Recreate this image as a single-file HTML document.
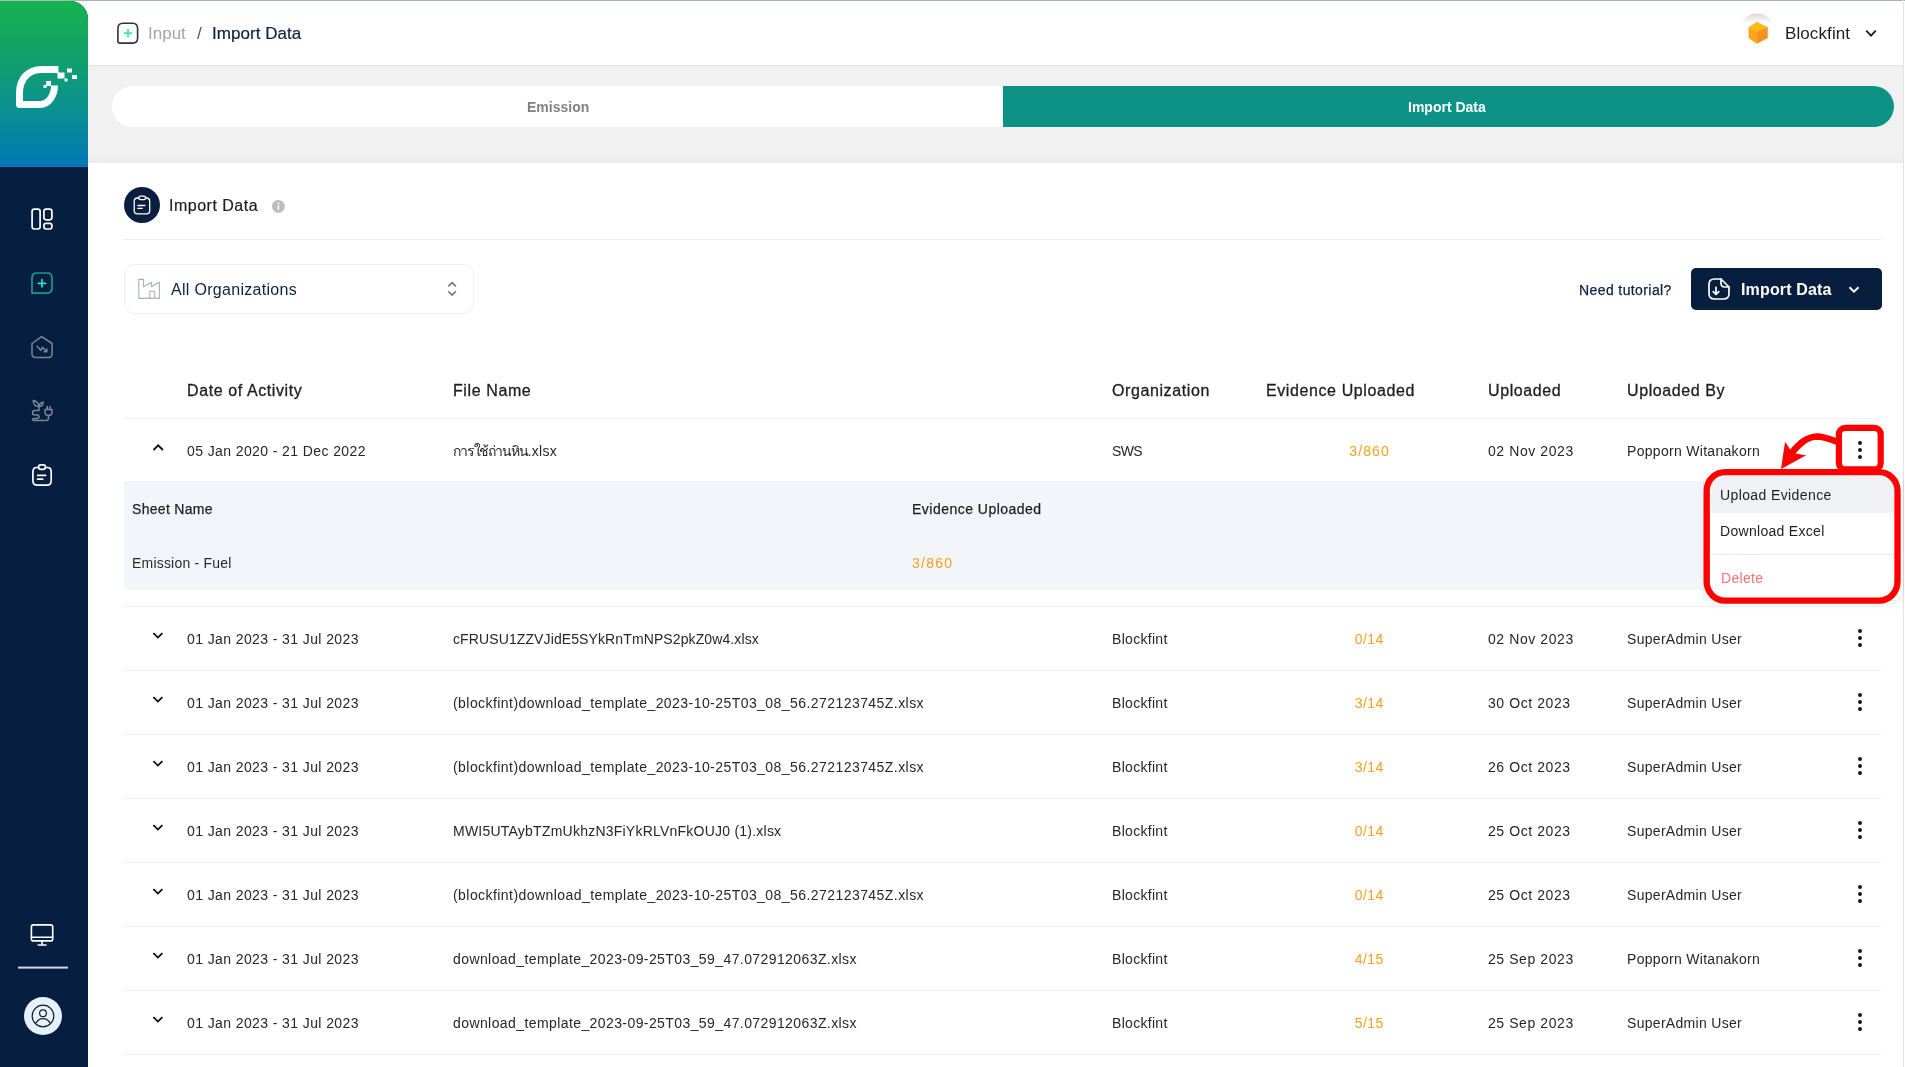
<!DOCTYPE html>
<html><head><meta charset="utf-8"><style>
*{box-sizing:border-box;margin:0;padding:0}
html,body{width:1905px;height:1067px;overflow:hidden;background:#fff;font-family:"Liberation Sans",sans-serif;color:#262626}
.a{position:absolute}
.t{position:absolute;white-space:nowrap;line-height:1;will-change:transform}
svg{position:absolute;overflow:visible}
</style></head><body>
<div class="a" style="left:0;top:0;width:1905px;height:1px;background:#a3b6bd"></div>
<div class="a" style="left:88px;top:1px;width:1815px;height:64px;background:#fff"></div>
<div class="a" style="left:88px;top:65px;width:1815px;height:1px;background:#e3e3e3"></div>
<div class="a" style="left:88px;top:66px;width:1815px;height:97px;background:linear-gradient(180deg,#f1f1f1 0%,#f1f1f1 88%,#ececec 100%)"></div>
<div class="a" style="left:1903px;top:0;width:1px;height:1067px;background:#e4e4e4"></div>
<div class="a" style="left:0;top:1px;width:88px;height:1066px;background:#061e3f;border-top-right-radius:18px;overflow:hidden"><div class="a" style="left:0;top:0;width:88px;height:166px;background:linear-gradient(180deg,#16b34f 0%,#10a06c 35%,#0b9190 65%,#0277b6 100%)"></div></div>
<svg style="left:0;top:0" width="88" height="170">
<path d="M58.5,69.5 L42,69.5 C28,69.5 19.5,79 19.5,93 L19.5,104.5 L40,104.5 C49,104.5 54.5,95 54.5,85.6" fill="none" stroke="#fff" stroke-width="7" stroke-linejoin="round"/>
<rect x="57.5" y="72.5" width="7" height="6" fill="#fff"/>
<rect x="64.5" y="78.5" width="3" height="3" fill="#fff"/>
<rect x="67" y="68.5" width="5" height="4" fill="#fff"/>
<rect x="72" y="75" width="5" height="4" fill="#fff"/>
<rect x="46" y="81" width="5" height="5" fill="#fff"/>
<rect x="43.5" y="85" width="3" height="3" fill="#fff"/>
</svg>
<svg style="left:0;top:0" width="88" height="1067">
<g fill="none" stroke="#fff" stroke-width="1.7">
 <rect x="32.1" y="209.2" width="8" height="19.8" rx="2.2"/>
 <rect x="43.9" y="209.2" width="8" height="10.6" rx="2.2"/>
 <rect x="43.9" y="223.3" width="8" height="5.7" rx="2.2"/>
</g>
<path d="M32,293.1 L32,278 Q32,273 37,273 L47,273 Q52,273 52,278 L52,288 Q52,293.1 47,293.1 Z" fill="none" stroke="#129e8c" stroke-width="1.7"/>
<path d="M42,279 V287.6 M37.7,283.3 H46.3" stroke="#1de9b6" stroke-width="1.7"/>
<g fill="none" stroke="#7a8797" stroke-width="1.5" stroke-linecap="round" stroke-linejoin="round">
 <path d="M32,343.5 L41.6,336.6 L52.1,343.5 L52.1,354 Q52.1,357.4 48.5,357.4 L35.6,357.4 Q32,357.4 32,354 Z"/>
 <path d="M37,346.3 L40.7,350.3 L42.4,347.3 L46.5,351.6 M46.8,348.9 L46.8,351.8 L44,351.8"/>
</g>
<g fill="none" stroke="#7a8797" stroke-width="1.5" stroke-linecap="round" stroke-linejoin="round">
 <path d="M33.2,400.5 Q33.5,406.5 39,406.5 Q38.5,401.5 33.2,400.5 Z"/>
 <path d="M43.3,402.3 Q39,403 39,406.5 Q42.7,406.3 43.3,402.3 Z"/>
 <path d="M39,406.5 L39,410.5 L34.8,410.5 Q32.5,410.5 32.5,412.8 Q32.5,415 34.8,415 L37,415 Q39,415 39,416.8 Q39,418.5 37,418.5 L34.8,418.5 Q32.5,418.5 32.5,419.5 Q32.5,420.5 34.8,420.5 L46,420.5 Q48.5,420.5 48.5,418 L48.5,415.5"/>
 <path d="M45,409.5 L52,409.5 L52,412 Q52,415.5 48.5,415.5 Q45,415.5 45,412 Z"/>
 <path d="M47.2,406.5 V409.5 M50,406.5 V409.5"/>
</g>
<g fill="none" stroke="#fff" stroke-width="1.7" stroke-linecap="round">
 <path d="M38.5,467.5 L36.5,467.5 Q32.9,467.5 32.9,472 L32.9,480.5 Q32.9,485.2 37.5,485.2 L46.8,485.2 Q51.2,485.2 51.2,480.5 L51.2,472 Q51.2,467.5 47.5,467.5 L45.5,467.5"/>
 <rect x="38.5" y="464.8" width="7" height="4.6" rx="2.3"/>
 <path d="M37.6,475.3 H45.6 M37.6,479.2 H42.7"/>
</g>
<g fill="none" stroke="#fff" stroke-width="1.6" stroke-linecap="round">
 <rect x="31.4" y="924.9" width="21.3" height="16" rx="2"/>
 <path d="M31.4,937.2 H52.7 M42,941 V945 M38.2,945 H46"/>
</g>
<rect x="18" y="966.6" width="50" height="2" fill="#d5d9df"/>
<circle cx="43" cy="1016" r="19" fill="#e3f2fd"/>
<g fill="none" stroke="#1a1a1a" stroke-width="1.2">
 <circle cx="43" cy="1016" r="10.8"/>
 <circle cx="43" cy="1013.3" r="3.4"/>
 <path d="M35.5,1023.8 Q38,1018.6 43,1018.6 Q48,1018.6 50.5,1023.8"/>
</g>
</svg>
<svg style="left:0;top:0" width="1905" height="66">
<path d="M117.9,41 L117.9,28.5 Q117.9,23.3 123,23.3 L132.5,23.3 Q137.6,23.3 137.6,28.5 L137.6,38 Q137.6,43.1 132.5,43.1 L120,43.1 Q117.9,43.1 117.9,41 Z" fill="none" stroke="#333" stroke-width="1.6" stroke-linejoin="round"/>
<path d="M128.05,29.1 V37.2 M124,33.1 H132.1" stroke="#33e6b3" stroke-width="1.7"/>
<circle cx="1757.2" cy="32.3" r="18.7" fill="url(#avg)"/>
<defs><linearGradient id="avg" x1="0" y1="0" x2="0" y2="1"><stop offset="0" stop-color="#dadada"/><stop offset="0.12" stop-color="#ebebeb"/><stop offset="0.22" stop-color="#f9f9f9"/><stop offset="0.3" stop-color="#ffffff"/><stop offset="1" stop-color="#ffffff"/></linearGradient></defs>
<path d="M1756.8,22.1 L1767.6,27.4 L1756.8,32.1 L1748.8,27.4 Z" fill="#fbb913" stroke="#fbb913" stroke-width="0.4"/>
<path d="M1748.8,27.4 L1756.8,32.1 L1756.8,43.4 L1748.8,38 Z" fill="#f9a61b" stroke="#f9a61b" stroke-width="0.4"/>
<path d="M1756.8,32.1 L1767.6,27.4 L1767.6,38 L1756.8,43.4 Z" fill="#f6921e" stroke="#f6921e" stroke-width="0.4"/>
<path d="M1866.2,30.6 L1871,35.6 L1875.8,30.6" fill="none" stroke="#1a1a1a" stroke-width="1.8"/>
</svg>
<div class="t" style="left:147.8px;top:24.88px;font-size:17px;color:#a5a5a5;font-weight:normal;letter-spacing:0px;">Input</div>
<div class="t" style="left:196.5px;top:24.88px;font-size:17px;color:#555;font-weight:normal;letter-spacing:0px;">/</div>
<div class="t" style="left:212.0px;top:24.88px;font-size:17px;color:#0c2142;font-weight:normal;letter-spacing:0.05px;-webkit-text-stroke:0.2px #0c2142">Import Data</div>
<div class="t" style="left:1784.6px;top:24.68px;font-size:17px;color:#1e1e1e;font-weight:normal;letter-spacing:0.1px;">Blockfint</div>
<div class="a" style="left:112px;top:86px;width:1782px;height:41px;background:#fff;border-radius:20.5px;overflow:hidden"><div class="a" style="left:891px;top:0;width:891px;height:41px;background:#0d9285"></div></div>
<div class="t" style="left:526.8px;top:99.97px;font-size:14px;color:#828282;font-weight:bold;letter-spacing:0px;">Emission</div>
<div class="t" style="left:1408.3px;top:99.97px;font-size:14px;color:#fff;font-weight:bold;letter-spacing:0px;">Import Data</div>
<svg style="left:0;top:0" width="400" height="330">
<circle cx="142" cy="205" r="18" fill="#0a1f40"/>
<g fill="none" stroke="#fff" stroke-width="1.3" stroke-linecap="round">
 <path d="M138.8,198 L137.5,198 Q134.2,198 134.2,201.5 L134.2,210.5 Q134.2,213.8 137.5,213.8 L146.5,213.8 Q149.7,213.8 149.7,210.5 L149.7,201.5 Q149.7,198 146.5,198 L145.5,198"/>
 <rect x="138.8" y="196.2" width="6.8" height="3.4" rx="1.7"/>
 <path d="M137.8,205.5 H144.9 M137.8,208.4 H142.1"/>
</g>
<circle cx="278.4" cy="206.4" r="6.4" fill="#bdbdbd"/>
<rect x="277.7" y="205.3" width="1.5" height="4.6" fill="#fff"/>
<circle cx="278.45" cy="203.4" r="0.9" fill="#fff"/>
<g fill="none" stroke="#a6afbb" stroke-width="1.1">
 <path d="M138.8,279.4 H143.5 V286.6 L151.6,282.4 V286.6 L159.4,282.2 V298.4 H138.8 Z"/>
 <path d="M149.8,298.4 V291.2 H154.7 V298.4"/>
</g>
<path d="M448.3,286.4 L452.1,282.6 L455.9,286.4 M448.3,291.3 L452.1,295.1 L455.9,291.3" fill="none" stroke="#6b7380" stroke-width="1.5"/>
</svg>
<div class="t" style="left:168.6px;top:198.01px;font-size:16px;color:#1e1e1e;font-weight:normal;letter-spacing:0.5px;-webkit-text-stroke:0.2px #1e1e1e">Import Data</div>
<div class="a" style="left:124px;top:239px;width:1758px;height:1px;background:#eceef2"></div>
<div class="a" style="left:124px;top:264px;width:350px;height:50px;border:1px solid #eceff3;border-radius:10px"></div>
<div class="t" style="left:171.4px;top:282.11px;font-size:16px;color:#0c2142;font-weight:normal;letter-spacing:0.3px;">All Organizations</div>
<div class="t" style="left:1578.7px;top:282.67px;font-size:14px;color:#0c2142;font-weight:normal;letter-spacing:0.4px;-webkit-text-stroke:0.25px #0c2142">Need tutorial?</div>
<div class="a" style="left:1691px;top:268px;width:191px;height:42px;border-radius:5px;background:#081e3e"></div>
<svg style="left:0;top:0" width="1905" height="330">
<g fill="none" stroke="#fff" stroke-width="1.7" stroke-linecap="round" stroke-linejoin="round">
 <path d="M1721,279 L1714.5,279 Q1709,279 1709,284.5 L1709,293.5 Q1709,299 1714.5,299 L1723.5,299 Q1729,299 1729,293.5 L1729,287 Z"/>
 <path d="M1721,279 L1721,283 Q1721,287 1725,287 L1729,287"/>
 <path d="M1716,287.3 V294.3 M1713.2,291.6 L1716,294.5 L1718.8,291.6"/>
</g>
<path d="M1849.5,287.2 L1854,291.7 L1858.5,287.2" fill="none" stroke="#fff" stroke-width="2"/>
</svg>
<div class="t" style="left:1740.6px;top:281.51px;font-size:16px;color:#fff;font-weight:bold;letter-spacing:0.15px;">Import Data</div>
<div class="t" style="left:186.6px;top:382.91px;font-size:16px;color:#1e1e1e;font-weight:normal;letter-spacing:0.6px;-webkit-text-stroke:0.3px #1e1e1e">Date of Activity</div>
<div class="t" style="left:452.5px;top:382.91px;font-size:16px;color:#1e1e1e;font-weight:normal;letter-spacing:0.6px;-webkit-text-stroke:0.3px #1e1e1e">File Name</div>
<div class="t" style="left:1112px;top:382.91px;font-size:16px;color:#1e1e1e;font-weight:normal;letter-spacing:0.6px;-webkit-text-stroke:0.3px #1e1e1e">Organization</div>
<div class="t" style="left:1266px;top:382.91px;font-size:16px;color:#1e1e1e;font-weight:normal;letter-spacing:0.6px;-webkit-text-stroke:0.3px #1e1e1e">Evidence Uploaded</div>
<div class="t" style="left:1488.3px;top:382.91px;font-size:16px;color:#1e1e1e;font-weight:normal;letter-spacing:0.6px;-webkit-text-stroke:0.3px #1e1e1e">Uploaded</div>
<div class="t" style="left:1626.5px;top:382.91px;font-size:16px;color:#1e1e1e;font-weight:normal;letter-spacing:0.6px;-webkit-text-stroke:0.3px #1e1e1e">Uploaded By</div>
<div class="a" style="left:124px;top:418px;width:1758px;height:1px;background:#eff3f9"></div>
<div class="a" style="left:124px;top:481px;width:1758px;height:109px;background:#f2f5fa"></div>
<div class="t" style="left:132.3px;top:502.17px;font-size:14px;color:#1e1e1e;font-weight:normal;letter-spacing:0.3px;-webkit-text-stroke:0.25px #1e1e1e">Sheet Name</div>
<div class="t" style="left:912.2px;top:502.17px;font-size:14px;color:#1e1e1e;font-weight:normal;letter-spacing:0.48px;-webkit-text-stroke:0.25px #1e1e1e">Evidence Uploaded</div>
<div class="t" style="left:132.3px;top:556.17px;font-size:14px;color:#2a2a2a;font-weight:normal;letter-spacing:0.2px;">Emission - Fuel</div>
<div class="t" style="left:912.4px;top:556.17px;font-size:14px;color:#f59f1c;font-weight:normal;letter-spacing:1.25px;">3/860</div>
<div class="t" style="left:186.6px;top:443.97px;font-size:14px;color:#262626;font-weight:normal;letter-spacing:0.4px;">05 Jan 2020 - 21 Dec 2022</div>
<div class="t" style="left:452.5px;top:443.97px;font-size:14px;color:#262626;font-weight:normal;letter-spacing:0px;"><span style="letter-spacing:-1.15px">การใช้ถ่านหิน</span><span style="letter-spacing:0.3px">.xlsx</span></div>
<div class="t" style="left:1112.3px;top:443.97px;font-size:14px;color:#262626;font-weight:normal;letter-spacing:-0.6px;">SWS</div>
<div class="t" style="left:1269px;width:200px;text-align:center;top:443.97px;font-size:14px;color:#f59f1c;letter-spacing:1.1px;text-indent:1.1px">3/860</div>
<div class="t" style="left:1488.3px;top:443.97px;font-size:14px;color:#262626;font-weight:normal;letter-spacing:0.58px;">02 Nov 2023</div>
<div class="t" style="left:1626.5px;top:443.97px;font-size:14px;color:#262626;font-weight:normal;letter-spacing:0.3px;">Popporn Witanakorn</div>
<div class="t" style="left:186.6px;top:631.87px;font-size:14px;color:#262626;font-weight:normal;letter-spacing:0.4px;">01 Jan 2023 - 31 Jul 2023</div>
<div class="t" style="left:452.5px;top:631.87px;font-size:14px;color:#262626;font-weight:normal;letter-spacing:0.11px;">cFRUSU1ZZVJidE5SYkRnTmNPS2pkZ0w4.xlsx</div>
<div class="t" style="left:1112.3px;top:631.87px;font-size:14px;color:#262626;font-weight:normal;letter-spacing:0.3px;">Blockfint</div>
<div class="t" style="left:1269px;width:200px;text-align:center;top:631.87px;font-size:14px;color:#f59f1c;letter-spacing:0.4px;text-indent:0.4px">0/14</div>
<div class="t" style="left:1488.3px;top:631.87px;font-size:14px;color:#262626;font-weight:normal;letter-spacing:0.58px;">02 Nov 2023</div>
<div class="t" style="left:1626.5px;top:631.87px;font-size:14px;color:#262626;font-weight:normal;letter-spacing:0.3px;">SuperAdmin User</div>
<div class="a" style="left:124px;top:670px;width:1758px;height:1px;background:#eff3f9"></div>
<div class="t" style="left:186.6px;top:695.87px;font-size:14px;color:#262626;font-weight:normal;letter-spacing:0.4px;">01 Jan 2023 - 31 Jul 2023</div>
<div class="t" style="left:452.5px;top:695.87px;font-size:14px;color:#262626;font-weight:normal;letter-spacing:0.44px;">(blockfint)download_template_2023-10-25T03_08_56.272123745Z.xlsx</div>
<div class="t" style="left:1112.3px;top:695.87px;font-size:14px;color:#262626;font-weight:normal;letter-spacing:0.3px;">Blockfint</div>
<div class="t" style="left:1269px;width:200px;text-align:center;top:695.87px;font-size:14px;color:#f59f1c;letter-spacing:0.4px;text-indent:0.4px">3/14</div>
<div class="t" style="left:1488.3px;top:695.87px;font-size:14px;color:#262626;font-weight:normal;letter-spacing:0.58px;">30 Oct 2023</div>
<div class="t" style="left:1626.5px;top:695.87px;font-size:14px;color:#262626;font-weight:normal;letter-spacing:0.3px;">SuperAdmin User</div>
<div class="a" style="left:124px;top:734px;width:1758px;height:1px;background:#eff3f9"></div>
<div class="t" style="left:186.6px;top:759.87px;font-size:14px;color:#262626;font-weight:normal;letter-spacing:0.4px;">01 Jan 2023 - 31 Jul 2023</div>
<div class="t" style="left:452.5px;top:759.87px;font-size:14px;color:#262626;font-weight:normal;letter-spacing:0.44px;">(blockfint)download_template_2023-10-25T03_08_56.272123745Z.xlsx</div>
<div class="t" style="left:1112.3px;top:759.87px;font-size:14px;color:#262626;font-weight:normal;letter-spacing:0.3px;">Blockfint</div>
<div class="t" style="left:1269px;width:200px;text-align:center;top:759.87px;font-size:14px;color:#f59f1c;letter-spacing:0.4px;text-indent:0.4px">3/14</div>
<div class="t" style="left:1488.3px;top:759.87px;font-size:14px;color:#262626;font-weight:normal;letter-spacing:0.58px;">26 Oct 2023</div>
<div class="t" style="left:1626.5px;top:759.87px;font-size:14px;color:#262626;font-weight:normal;letter-spacing:0.3px;">SuperAdmin User</div>
<div class="a" style="left:124px;top:798px;width:1758px;height:1px;background:#eff3f9"></div>
<div class="t" style="left:186.6px;top:823.87px;font-size:14px;color:#262626;font-weight:normal;letter-spacing:0.4px;">01 Jan 2023 - 31 Jul 2023</div>
<div class="t" style="left:452.5px;top:823.87px;font-size:14px;color:#262626;font-weight:normal;letter-spacing:0.23px;">MWI5UTAybTZmUkhzN3FiYkRLVnFkOUJ0 (1).xlsx</div>
<div class="t" style="left:1112.3px;top:823.87px;font-size:14px;color:#262626;font-weight:normal;letter-spacing:0.3px;">Blockfint</div>
<div class="t" style="left:1269px;width:200px;text-align:center;top:823.87px;font-size:14px;color:#f59f1c;letter-spacing:0.4px;text-indent:0.4px">0/14</div>
<div class="t" style="left:1488.3px;top:823.87px;font-size:14px;color:#262626;font-weight:normal;letter-spacing:0.58px;">25 Oct 2023</div>
<div class="t" style="left:1626.5px;top:823.87px;font-size:14px;color:#262626;font-weight:normal;letter-spacing:0.3px;">SuperAdmin User</div>
<div class="a" style="left:124px;top:862px;width:1758px;height:1px;background:#eff3f9"></div>
<div class="t" style="left:186.6px;top:887.87px;font-size:14px;color:#262626;font-weight:normal;letter-spacing:0.4px;">01 Jan 2023 - 31 Jul 2023</div>
<div class="t" style="left:452.5px;top:887.87px;font-size:14px;color:#262626;font-weight:normal;letter-spacing:0.44px;">(blockfint)download_template_2023-10-25T03_08_56.272123745Z.xlsx</div>
<div class="t" style="left:1112.3px;top:887.87px;font-size:14px;color:#262626;font-weight:normal;letter-spacing:0.3px;">Blockfint</div>
<div class="t" style="left:1269px;width:200px;text-align:center;top:887.87px;font-size:14px;color:#f59f1c;letter-spacing:0.4px;text-indent:0.4px">0/14</div>
<div class="t" style="left:1488.3px;top:887.87px;font-size:14px;color:#262626;font-weight:normal;letter-spacing:0.58px;">25 Oct 2023</div>
<div class="t" style="left:1626.5px;top:887.87px;font-size:14px;color:#262626;font-weight:normal;letter-spacing:0.3px;">SuperAdmin User</div>
<div class="a" style="left:124px;top:926px;width:1758px;height:1px;background:#eff3f9"></div>
<div class="t" style="left:186.6px;top:951.87px;font-size:14px;color:#262626;font-weight:normal;letter-spacing:0.4px;">01 Jan 2023 - 31 Jul 2023</div>
<div class="t" style="left:452.5px;top:951.87px;font-size:14px;color:#262626;font-weight:normal;letter-spacing:0.41px;">download_template_2023-09-25T03_59_47.072912063Z.xlsx</div>
<div class="t" style="left:1112.3px;top:951.87px;font-size:14px;color:#262626;font-weight:normal;letter-spacing:0.3px;">Blockfint</div>
<div class="t" style="left:1269px;width:200px;text-align:center;top:951.87px;font-size:14px;color:#f59f1c;letter-spacing:0.4px;text-indent:0.4px">4/15</div>
<div class="t" style="left:1488.3px;top:951.87px;font-size:14px;color:#262626;font-weight:normal;letter-spacing:0.58px;">25 Sep 2023</div>
<div class="t" style="left:1626.5px;top:951.87px;font-size:14px;color:#262626;font-weight:normal;letter-spacing:0.3px;">Popporn Witanakorn</div>
<div class="a" style="left:124px;top:990px;width:1758px;height:1px;background:#eff3f9"></div>
<div class="t" style="left:186.6px;top:1015.87px;font-size:14px;color:#262626;font-weight:normal;letter-spacing:0.4px;">01 Jan 2023 - 31 Jul 2023</div>
<div class="t" style="left:452.5px;top:1015.87px;font-size:14px;color:#262626;font-weight:normal;letter-spacing:0.41px;">download_template_2023-09-25T03_59_47.072912063Z.xlsx</div>
<div class="t" style="left:1112.3px;top:1015.87px;font-size:14px;color:#262626;font-weight:normal;letter-spacing:0.3px;">Blockfint</div>
<div class="t" style="left:1269px;width:200px;text-align:center;top:1015.87px;font-size:14px;color:#f59f1c;letter-spacing:0.4px;text-indent:0.4px">5/15</div>
<div class="t" style="left:1488.3px;top:1015.87px;font-size:14px;color:#262626;font-weight:normal;letter-spacing:0.58px;">25 Sep 2023</div>
<div class="t" style="left:1626.5px;top:1015.87px;font-size:14px;color:#262626;font-weight:normal;letter-spacing:0.3px;">SuperAdmin User</div>
<div class="a" style="left:124px;top:1054px;width:1758px;height:1px;background:#eff3f9"></div>
<div class="a" style="left:124px;top:606px;width:1758px;height:1px;background:#eff3f9"></div>
<svg style="left:0;top:0" width="1905" height="1067">
<path d="M153.5,450 L158.2,445.3 L162.9,450" fill="none" stroke="#111" stroke-width="1.9"/>
<circle cx="1860" cy="443" r="1.95" fill="#111"/>
<circle cx="1860" cy="450" r="1.95" fill="#111"/>
<circle cx="1860" cy="457" r="1.95" fill="#111"/>
<path d="M153.4,633.1 L157.9,637.6 L162.4,633.1" fill="none" stroke="#111" stroke-width="1.8"/>
<circle cx="1860" cy="631" r="1.95" fill="#111"/>
<circle cx="1860" cy="638" r="1.95" fill="#111"/>
<circle cx="1860" cy="645" r="1.95" fill="#111"/>
<path d="M153.4,697.1 L157.9,701.6 L162.4,697.1" fill="none" stroke="#111" stroke-width="1.8"/>
<circle cx="1860" cy="695" r="1.95" fill="#111"/>
<circle cx="1860" cy="702" r="1.95" fill="#111"/>
<circle cx="1860" cy="709" r="1.95" fill="#111"/>
<path d="M153.4,761.1 L157.9,765.6 L162.4,761.1" fill="none" stroke="#111" stroke-width="1.8"/>
<circle cx="1860" cy="759" r="1.95" fill="#111"/>
<circle cx="1860" cy="766" r="1.95" fill="#111"/>
<circle cx="1860" cy="773" r="1.95" fill="#111"/>
<path d="M153.4,825.1 L157.9,829.6 L162.4,825.1" fill="none" stroke="#111" stroke-width="1.8"/>
<circle cx="1860" cy="823" r="1.95" fill="#111"/>
<circle cx="1860" cy="830" r="1.95" fill="#111"/>
<circle cx="1860" cy="837" r="1.95" fill="#111"/>
<path d="M153.4,889.1 L157.9,893.6 L162.4,889.1" fill="none" stroke="#111" stroke-width="1.8"/>
<circle cx="1860" cy="887" r="1.95" fill="#111"/>
<circle cx="1860" cy="894" r="1.95" fill="#111"/>
<circle cx="1860" cy="901" r="1.95" fill="#111"/>
<path d="M153.4,953.1 L157.9,957.6 L162.4,953.1" fill="none" stroke="#111" stroke-width="1.8"/>
<circle cx="1860" cy="951" r="1.95" fill="#111"/>
<circle cx="1860" cy="958" r="1.95" fill="#111"/>
<circle cx="1860" cy="965" r="1.95" fill="#111"/>
<path d="M153.4,1017.1 L157.9,1021.6 L162.4,1017.1" fill="none" stroke="#111" stroke-width="1.8"/>
<circle cx="1860" cy="1015" r="1.95" fill="#111"/>
<circle cx="1860" cy="1022" r="1.95" fill="#111"/>
<circle cx="1860" cy="1029" r="1.95" fill="#111"/>
</svg>
<div class="a" style="left:1703.5px;top:472.5px;width:199px;height:127px;background:#fff;border-radius:8px;box-shadow:0 4px 8px rgba(16,24,40,0.06),0 0 0 1px rgba(16,24,40,0.05)"></div>
<div class="a" style="left:1711px;top:476px;width:183px;height:37px;background:#f0f1f3;border-radius:4px"></div>
<div class="a" style="left:1711px;top:554px;width:191px;height:1px;background:#e4e9ef"></div>
<div class="t" style="left:1720.2px;top:488.17px;font-size:14px;color:#1e1e1e;font-weight:normal;letter-spacing:0.39px;">Upload Evidence</div>
<div class="t" style="left:1720.2px;top:523.77px;font-size:14px;color:#1e1e1e;font-weight:normal;letter-spacing:0.3px;">Download Excel</div>
<div class="t" style="left:1720.6px;top:571.17px;font-size:14px;color:#f87171;font-weight:normal;letter-spacing:0.3px;">Delete</div>
<svg style="left:0;top:0" width="1905" height="1067">
<rect x="1838.9" y="427.8" width="41.8" height="41.6" rx="6.5" fill="none" stroke="#ff0000" stroke-width="6.2"/>
<rect x="1706.7" y="472.1" width="190.8" height="128.5" rx="18.5" fill="none" stroke="#ff0000" stroke-width="6.3"/>
<path d="M1838,442 C1830,439 1823,436.5 1817,436.5 C1807,436.8 1800,443 1792,452.5" fill="none" stroke="#ff0000" stroke-width="6.6"/>
<path d="M1781,469 L1785.1,441.7 L1791.5,451.5 L1796.5,453.8 L1806.2,455.3 Z" fill="#ff0000"/>
</svg>
</body></html>
